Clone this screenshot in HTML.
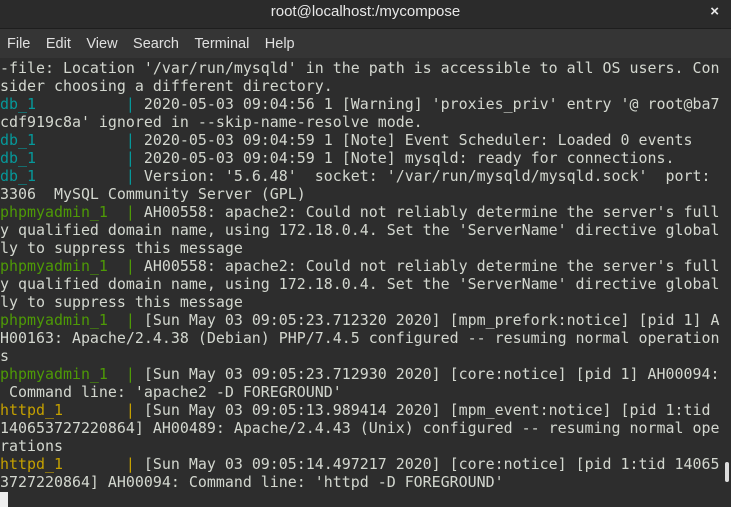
<!DOCTYPE html><html><head><style>
body{margin:0;width:731px;height:507px;overflow:hidden;background:#2d2d2d;font-family:"Liberation Sans",sans-serif}
#t{height:28px;background:#2b2b2b;color:#e8e8e8;font-size:15px;text-align:center;line-height:24px;border-bottom:1px solid #1e1e1e;position:relative}
#t span{position:absolute;right:12px;top:0;font-weight:bold;font-size:15px}
#m{height:29px;background:#353535;color:#e0e0e0;font-size:14.5px;line-height:30px;padding-left:7px}
#m b{font-weight:normal;margin-right:15.5px}
pre{margin:0;position:absolute;top:59px;left:0;font-family:"DejaVu Sans Mono",monospace;font-size:14.95px;line-height:18px;color:#d3d7cf;background:#2d2d2d}
.c{color:#06989a}.g{color:#4e9a06}.y{color:#c4a000}
#cur{position:absolute;left:0;top:492px;width:8px;height:15px;background:#eee}
#sb{position:absolute;right:2px;top:462px;width:4px;height:20px;background:#ddd;border-radius:2px}
</style></head><body>
<div id="t">root@localhost:/mycompose<span>×</span></div>
<div id="m"><b>File</b><b>Edit</b><b>View</b><b>Search</b><b>Terminal</b><b>Help</b></div>
<pre>-file: Location '/var/run/mysqld' in the path is accessible to all OS users. Con
sider choosing a different directory.
<span class="c">db_1          |</span> 2020-05-03 09:04:56 1 [Warning] 'proxies_priv' entry '@ root@ba7
cdf919c8a' ignored in --skip-name-resolve mode.
<span class="c">db_1          |</span> 2020-05-03 09:04:59 1 [Note] Event Scheduler: Loaded 0 events
<span class="c">db_1          |</span> 2020-05-03 09:04:59 1 [Note] mysqld: ready for connections.
<span class="c">db_1          |</span> Version: '5.6.48'  socket: '/var/run/mysqld/mysqld.sock'  port:
3306  MySQL Community Server (GPL)
<span class="g">phpmyadmin_1  |</span> AH00558: apache2: Could not reliably determine the server's full
y qualified domain name, using 172.18.0.4. Set the 'ServerName' directive global
ly to suppress this message
<span class="g">phpmyadmin_1  |</span> AH00558: apache2: Could not reliably determine the server's full
y qualified domain name, using 172.18.0.4. Set the 'ServerName' directive global
ly to suppress this message
<span class="g">phpmyadmin_1  |</span> [Sun May 03 09:05:23.712320 2020] [mpm_prefork:notice] [pid 1] A
H00163: Apache/2.4.38 (Debian) PHP/7.4.5 configured -- resuming normal operation
s
<span class="g">phpmyadmin_1  |</span> [Sun May 03 09:05:23.712930 2020] [core:notice] [pid 1] AH00094:
 Command line: 'apache2 -D FOREGROUND'
<span class="y">httpd_1       |</span> [Sun May 03 09:05:13.989414 2020] [mpm_event:notice] [pid 1:tid
140653727220864] AH00489: Apache/2.4.43 (Unix) configured -- resuming normal ope
rations
<span class="y">httpd_1       |</span> [Sun May 03 09:05:14.497217 2020] [core:notice] [pid 1:tid 14065
3727220864] AH00094: Command line: 'httpd -D FOREGROUND'</pre>
<div id="cur"></div><div id="sb"></div>
</body></html>
